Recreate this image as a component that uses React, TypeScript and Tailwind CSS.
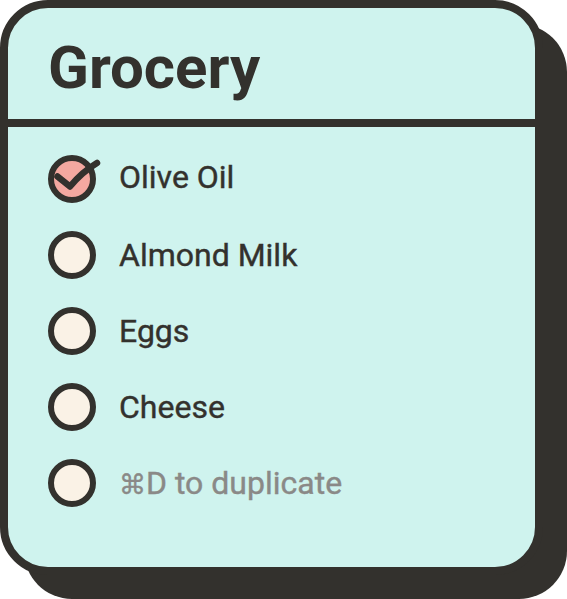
import React from "react";

const items = [
  { label: "Olive Oil", checked: true, pb: "pb-[5px]" },
  { label: "Almond Milk", checked: false, pb: "pb-0" },
  { label: "Eggs", checked: false, pb: "pb-0" },
  { label: "Cheese", checked: false, pb: "pb-0" },
  { label: "⌘D to duplicate", checked: false, placeholder: true, pb: "pb-0" },
];

export default function App() {
  return (
    <div className="w-[567px] h-[599px] bg-white" style={{ fontFamily: "Roboto, 'Noto Sans', sans-serif" }}>
      <div className="w-[543px] h-[575px] rounded-[48px] border-[8px] border-[#33312d] bg-[#cff3ee] shadow-[24px_24px_0_0_#33312d] overflow-hidden flex flex-col">
        <div className="h-[119px] pt-[30px] px-[40px] border-b-[8px] border-[#33312d] shrink-0">
          <div className="text-[60px] leading-[60px] font-bold text-[#33312d]">Grocery</div>
        </div>
        <div className="flex flex-col gap-[28px] pt-[28px] px-[40px]">
          {items.map((it) => (
            <div key={it.label} className="flex items-center gap-[23px] h-[48px]">
              <div className="relative w-[48px] h-[48px] shrink-0">
                <div
                  className={
                    "w-[48px] h-[48px] rounded-full border-[6px] border-[#33312d] " +
                    (it.checked ? "bg-[#f4a8a0]" : "bg-[#faf2e6]")
                  }
                />
                {it.checked && (
                  <svg className="absolute left-0 top-0 overflow-visible" width="48" height="48" viewBox="0 0 48 48">
                    <path d="M9.5 21.5 L22 31.5 Q34 17 49 8" fill="none" stroke="#33312d" strokeWidth="6.5" strokeLinecap="round" strokeLinejoin="round" />
                  </svg>
                )}
              </div>
              <span
                className={
                  "text-[32px] font-normal leading-none [-webkit-text-stroke:0.4px_currentColor] " +
                  it.pb +
                  " " +
                  (it.placeholder ? "text-[#8a8987]" : "text-[#33312d]")
                }
              >
                {it.placeholder ? (
                  <>
                    <span className="text-[27px]" style={{ fontFamily: "'DejaVu Sans', sans-serif" }}>⌘</span>
                    D to duplicate
                  </>
                ) : (
                  it.label
                )}
              </span>
            </div>
          ))}
        </div>
      </div>
    </div>
  );
}
